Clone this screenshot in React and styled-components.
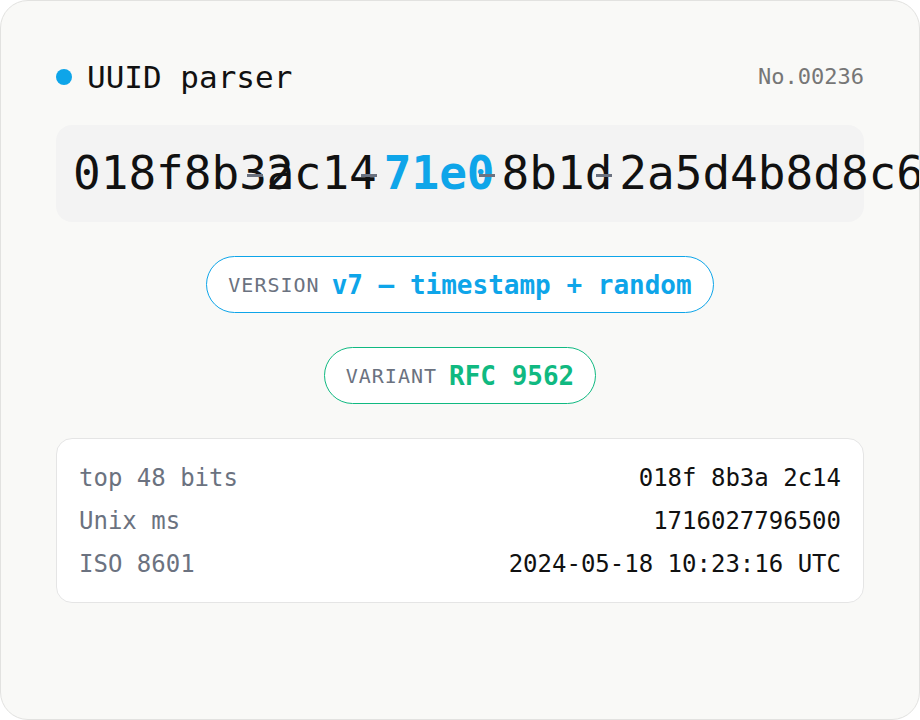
import React from "react";
import styled, { createGlobalStyle } from "styled-components";

const Global = createGlobalStyle`
  html, body { margin: 0; padding: 0; background: #ffffff; }
  body { font-family: "DejaVu Sans Mono", "Liberation Mono", monospace; }
  * { box-sizing: border-box; }
`;

const Card = styled.div`
  width: 920px;
  height: 720px;
  border: 1px solid #e2e2e0;
  border-radius: 28px;
  background: #f9f9f7;
  overflow: hidden;
  padding: 60px 55px 0 55px;
  display: flex;
  flex-direction: column;
  gap: 34px;
  font-family: "DejaVu Sans Mono", "Liberation Mono", monospace;
`;

const Header = styled.div`
  height: 30px;
  padding-top: 2px;
  display: flex;
  align-items: center;
  justify-content: space-between;
`;

const TitleWrap = styled.div`
  display: flex;
  align-items: center;
  gap: 15px;
`;

const Dot = styled.span`
  width: 16px;
  height: 16px;
  border-radius: 50%;
  background: #0ea5e9;
  flex: none;
`;

const Title = styled.h1`
  margin: 0;
  font-size: 31px;
  font-weight: 400;
  line-height: 28px;
  color: #111111;
`;

const Serial = styled.span`
  font-size: 22px;
  line-height: 28px;
  color: #767676;
`;

const UuidBox = styled.div`
  height: 97px;
  border-radius: 16px;
  background: #f3f3f3;
  padding-left: 17px;
  display: flex;
  align-items: center;
  gap: 7px;
  white-space: nowrap;
  font-size: 46px;
  line-height: 47px;
`;

const Group = styled.span`
  position: relative;
  flex: none;
  width: ${(p) => (p.$w ? `${p.$w}px` : "auto")};
  color: ${(p) => (p.$accent ? "#0ea5e9" : "#111111")};
  font-weight: ${(p) => (p.$accent ? 700 : 400)};

  ${(p) =>
    p.$dash &&
    `
    &::after {
      content: "";
      position: absolute;
      right: ${p.$dashRight ?? 0}px;
      top: 24px;
      width: 16px;
      height: 3px;
      background: #6b7280;
    }
  `}
`;

const Pill = styled.div`
  align-self: center;
  height: 57px;
  padding: 0 21px;
  border-radius: 999px;
  border: 1px solid ${(p) => p.$color};
  background: #ffffff;
  display: inline-flex;
  align-items: center;
  gap: 12px;
  white-space: nowrap;
`;

const PillLabel = styled.span`
  font-size: 20px;
  letter-spacing: 1px;
  color: #6b7280;
`;

const PillValue = styled.span`
  font-size: 26px;
  font-weight: 700;
  color: ${(p) => p.$color};
`;

const Details = styled.div`
  background: #ffffff;
  border: 1px solid #e5e5e5;
  border-radius: 16px;
  padding: 17px 22px;
  display: flex;
  flex-direction: column;
`;

const Row = styled.div`
  height: 43px;
  display: flex;
  align-items: center;
  justify-content: space-between;
  font-size: 24px;
  white-space: nowrap;
`;

const Key = styled.span`
  color: #6b7280;
`;

const Val = styled.span`
  color: #111111;
`;

const groups = [
  { text: "018f8b3a", w: 186, dash: true, dashRight: -4 },
  { text: "2c14", dash: true },
  { text: "71e0", dash: true, accent: true },
  { text: "8b1d", dash: true },
  { text: "2a5d4b8d8c6e" },
];

const rows = [
  ["top 48 bits", "018f 8b3a 2c14"],
  ["Unix ms", "1716027796500"],
  ["ISO 8601", "2024-05-18 10:23:16 UTC"],
];

export default function App() {
  return (
    <>
      <Global />
      <Card>
        <Header>
          <TitleWrap>
            <Dot />
            <Title>UUID parser</Title>
          </TitleWrap>
          <Serial>No.00236</Serial>
        </Header>

        <UuidBox>
          {groups.map((g, i) => (
            <Group
              key={i}
              $w={g.w}
              $dash={g.dash}
              $dashRight={g.dashRight}
              $accent={g.accent}
            >
              {g.text}
            </Group>
          ))}
        </UuidBox>

        <Pill $color="#0ea5e9">
          <PillLabel>VERSION</PillLabel>
          <PillValue $color="#0ea5e9">v7 — timestamp + random</PillValue>
        </Pill>

        <Pill $color="#10b981">
          <PillLabel>VARIANT</PillLabel>
          <PillValue $color="#10b981">RFC 9562</PillValue>
        </Pill>

        <Details>
          {rows.map(([k, v]) => (
            <Row key={k}>
              <Key>{k}</Key>
              <Val>{v}</Val>
            </Row>
          ))}
        </Details>
      </Card>
    </>
  );
}
